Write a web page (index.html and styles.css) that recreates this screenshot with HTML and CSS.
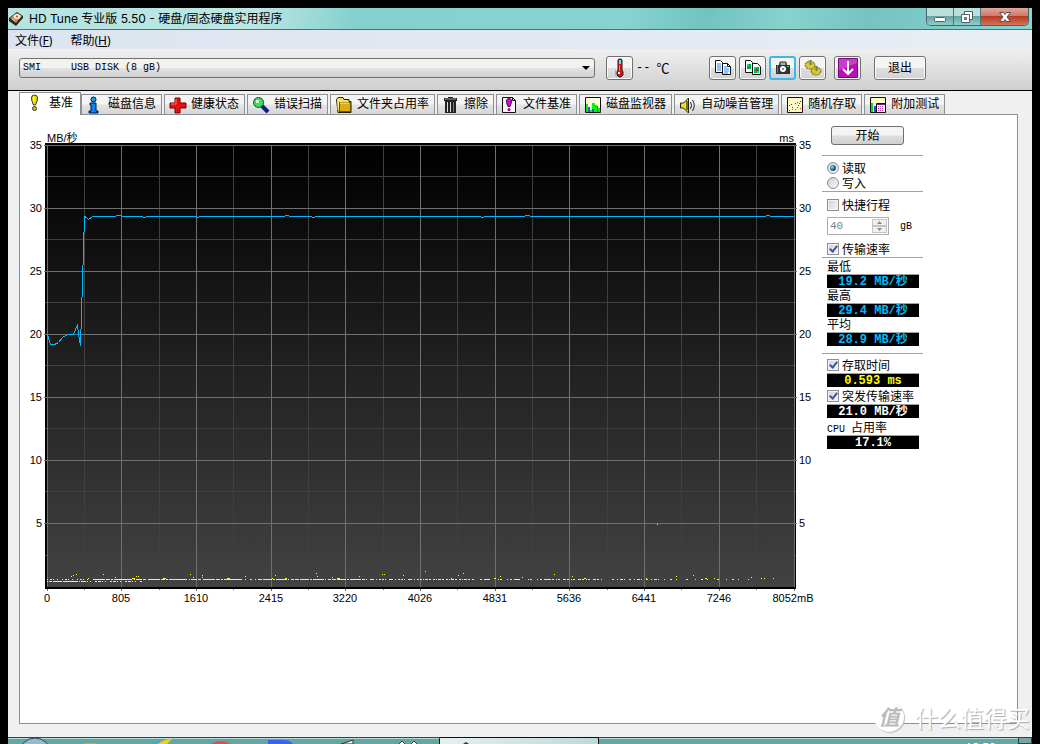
FILE: index.html
```html
<!DOCTYPE html>
<html lang="zh-CN">
<head>
<meta charset="utf-8">
<title>HD Tune 专业版 5.50</title>
<link rel="stylesheet" href="styles.css">
</head>
<body>
<div class="window">
  <header class="titlebar">
    <svg class="app-icon" width="16" height="16" viewBox="0 0 16 16"><path d="M1 7 9 1l6 4v2l-7 8-7-5z" fill="#2a2422"/><path d="M2 7 9 2l5 3-6 7z" fill="#c98a4a"/><ellipse cx="9" cy="5.500" rx="3.500" ry="2.500" fill="#f4e8d4"/><circle cx="9" cy="5.500" r="1" fill="#8a5a30"/><path d="m4 8 3 2" stroke="#f5d9a8"/></svg>
    <h1 class="title">HD Tune 专业版 5.50 - 硬盘/固态硬盘实用程序</h1>
    <div class="controls">
      <button class="control" aria-label="最小化"><svg width="14" height="14" viewBox="0 0 14 14"><rect x="1.500" y="7.500" width="11" height="4" rx="1" fill="#fff" stroke="#53606b"/></svg></button>
      <button class="control" aria-label="还原"><svg width="14" height="14" viewBox="0 0 14 14"><path d="M4.500 1.500h8v8h-8z" fill="#fff" stroke="#53606b"/><path d="M1.500 4.500h8v8h-8z" fill="#fff" stroke="#53606b"/><path d="M4.500 7.500h2v2h-2z" fill="#8bc" stroke="#53606b"/></svg></button>
      <button class="control close" aria-label="关闭"><svg width="14" height="12" viewBox="0 0 14 12"><path d="M1.500 1.500h4L7 3.500l1.500-2h4L9 6l3.500 4.500h-4L7 8.500l-1.500 2h-4L5 6z" fill="#fff" stroke="#5b4a4c"/></svg></button>
    </div>
  </header>

  <nav class="menubar">
    <button class="menu">文件(<u>F</u>)</button>
    <button class="menu">帮助(<u>H</u>)</button>
  </nav>

  <div class="toolbar">
    <div class="combo">
      <select class="drive" aria-label="硬盘"><option>SMI&nbsp;&nbsp;&nbsp;&nbsp;&nbsp;USB DISK (8 gB)</option></select>
      <svg class="arrow" width="8" height="4" viewBox="0 0 8 4"><path d="M0 0h8L4 4z"/></svg>
    </div>
    <button class="tool" aria-label="温度"><svg width="16" height="20" viewBox="0 0 16 20"><path d="M6 2q0-1 2-1t2 1v10l1 2v3l-2 2H7l-2-2v-3l1-2z" fill="#e01010" stroke="#222"/><path d="M7 2h2v4H7z" fill="#4fe3ee"/><path d="M7 7h1v6H7z" fill="#ff7a6a"/><path d="M6 14h2v2H6z" fill="#fff"/><path d="M3.500 12v5l2 2" fill="none" stroke="#5cc"/></svg></button>
    <span class="temp"><span>--</span><span class="deg">℃</span></span>
    <div class="tools">
      <button class="tool" aria-label="复制文本"><svg width="18" height="16" viewBox="0 0 18 16"><path d="M1.500.500h5l2 2v10h-7z" fill="#fff" stroke="#111"/><path d="M3 4h4M3 6h4M3 8h4M3 10h4" stroke="#28f"/><path d="M8.500 3.500h5l3 3v8h-8z" fill="#fff" stroke="#111"/><path d="M13.500 3.500v3h3" fill="none" stroke="#111"/><path d="M10 7h3M10 9h5M10 11h5M10 13h4" stroke="#28f"/></svg></button>
      <button class="tool" aria-label="复制图像"><svg width="18" height="16" viewBox="0 0 18 16"><path d="M1.500.500h5l2 2v10h-7z" fill="#fff" stroke="#111"/><path d="M3 4h4v5H3z" fill="#0a3"/><path d="M3 4h2v2H3z" fill="#1bf"/><path d="M8.500 3.500h5l3 3v8h-8z" fill="#fff" stroke="#111"/><path d="M10 7h5v6h-5z" fill="#0b3"/><path d="M10 7h2v2h-2zM13 11h2v2h-2z" fill="#1bf"/><path d="M12 9h2v2h-2z" fill="#e11"/></svg></button>
      <button class="tool hot" aria-label="截图"><svg width="18" height="14" viewBox="0 0 18 14"><path d="M2 4h3l1-3h6l1 3h3v9H2z" fill="#2d3138"/><path d="M6 4V1h6v3" fill="#aaa" stroke="#333"/><path d="M3 4h1v8H3z" fill="#777"/><circle cx="9" cy="8" r="3" fill="#fff"/><circle cx="9" cy="8" r="1" fill="#667"/><path d="M13 5h2v1h-2z" fill="#1e2"/></svg></button>
      <button class="tool" aria-label="选项"><svg width="18" height="18" viewBox="0 0 18 18"><g stroke="#6b6714" fill="#c9bd22"><ellipse cx="6" cy="6" rx="5" ry="4" stroke-dasharray="2 1"/><ellipse cx="12" cy="12" rx="5" ry="4" stroke-dasharray="2 1"/></g><path d="M2 6h8M4 8h6M9 12h7M5 3h3M11 14h4" stroke="#e6da3c"/><path d="M6.500 1v5M12.500 7v5" stroke="#777" stroke-width="2"/></svg></button>
      <button class="tool save" aria-label="保存"><svg width="20" height="20" viewBox="0 0 20 20"><path d="M.500.500h19v19H.500z" fill="#b412b6" stroke="#7b087c"/><path d="M1 1h18v4L1 12z" fill="#c63fc8"/><path d="M10 3v13M5 11l5 5 5-5" fill="none" stroke="#fff" stroke-width="2"/></svg></button>
      <button class="tool exit">退出</button>
    </div>
  </div>

  <main class="content">
    <div class="tabs" role="tablist">
      <button class="tab active" role="tab" aria-selected="true"><svg width="18" height="18" viewBox="0 0 18 18"><path d="M4.500 4q0-3 3-3t3 3-2 7h-2q-2-4-2-7z" fill="#f0e000" stroke="#333"/><path d="M6 3h1v4H6z" fill="#fff"/><circle cx="7.500" cy="14.500" r="2" fill="#d8c800" stroke="#333"/></svg>基准</button>
      <button class="tab" role="tab"><svg width="18" height="18" viewBox="0 0 18 18"><path d="M4 7h6v8h2v2H3v-2h2V9H4z" fill="#08f" stroke="#013"/><circle cx="7.500" cy="3.500" r="2.500" fill="#1aa0f0" stroke="#013"/></svg>磁盘信息</button>
      <button class="tab" role="tab"><svg width="18" height="18" viewBox="0 0 18 18"><path d="M6 2h5v5h6v5h-6v5H6v-5H1V7h5z" fill="#e81010" stroke="#700"/><path d="M7 3v5H2" fill="none" stroke="#f77"/></svg>健康状态</button>
      <button class="tab" role="tab"><svg width="18" height="18" viewBox="0 0 18 18"><path d="m10 10 6 6" stroke="#102080" stroke-width="4"/><circle cx="6.500" cy="6.500" r="5" fill="#38df58" stroke="#244"/><path d="M4 4h3v3H4z" fill="#d4ffd4"/></svg>错误扫描</button>
      <button class="tab" role="tab"><svg width="18" height="18" viewBox="0 0 18 18"><path d="M1.500 3.500 3 1.500h5l1 2h5v2h2v11h-13z" fill="#f7dc55" stroke="#221c00"/><path d="M4.500 6.500h11v9h-11z" fill="#dfae0c" stroke="#665000"/><path d="M3 4v10M5 7h9" stroke="#fff2a0"/></svg>文件夹占用率</button>
      <button class="tab" role="tab"><svg width="18" height="18" viewBox="0 0 18 18"><path d="M2 2h4V1h5v1h4v3h-1v12H3V5H2z" fill="#222"/><path d="M3 3h11" stroke="#999"/><path d="M5.500 6v10M8.500 6v10" stroke="#ddd"/><path d="M11.500 6v10" stroke="#777"/></svg>擦除</button>
      <button class="tab" role="tab"><svg width="18" height="18" viewBox="0 0 18 18"><path d="M1.500 1.500h10l3 3v12h-13z" fill="#f5f5f5" stroke="#111"/><path d="M11.500 1.500v3h3" fill="none" stroke="#111"/><path d="M5.500 5q0-2.500 2.500-2.500T10.500 5 9 10.500H7Q5.500 8 5.500 5z" fill="#d60dd6" stroke="#414"/><circle cx="8" cy="13.500" r="1.500" fill="#a0a"/></svg>文件基准</button>
      <button class="tab" role="tab"><svg width="18" height="18" viewBox="0 0 18 18"><path d="M1.500 1.500h15v15h-15z" fill="#fffcd8" stroke="#111"/><path d="M2 16V8h2v3h2v3h2V7h3v2h2v3h3v4z" fill="#10ea18"/><path d="M4 11h2v5H4zM8 13h2v3H8zM13 10h1v6h-1z" fill="#35d"/></svg>磁盘监视器</button>
      <button class="tab" role="tab"><svg width="18" height="18" viewBox="0 0 18 18"><path d="M1.500 7v5h3l5 5V2l-5 5z" fill="#ece01c" stroke="#222"/><path d="M8 5v9" stroke="#777b00" stroke-width="2"/><path d="M11.500 6q2 3.500 0 7M13.500 4q3.500 5.500 0 11" fill="none" stroke="#222"/></svg>自动噪音管理</button>
      <button class="tab" role="tab"><svg width="18" height="18" viewBox="0 0 18 18"><path d="M1.500 1.500h15v15h-15z" fill="#fff9c8" stroke="#111"/><path d="M3 9.500h1M6 11.500h1M9 7.500h1M12 9.500h1M14 5.500h1M5 8.500h1" stroke="#23f"/><path d="M3 14.500h1M6 13.500h1M9 13.500h1M11 11.500h1M14 12.500h1M11 6.500h1M13 7.500h1" stroke="#e22"/></svg>随机存取</button>
      <button class="tab" role="tab"><svg width="18" height="18" viewBox="0 0 18 18"><path d="M1.500 1.500h15v15h-15z" fill="#fff9c8" stroke="#111"/><path d="M2 7h2v9H2z" fill="#0d2"/><path d="M5 10h2v6H5z" fill="#34e"/><path d="M7.500 7.500h9v9h-9z" fill="#fff" stroke="#111"/><path d="M8 8.500h8" stroke="#339"/><path d="M9 10.500h6M9 12.500h6M9 14.500h6" stroke="#c3a" stroke-dasharray="1 1"/></svg>附加测试</button>
    </div>

    <section class="panel" role="tabpanel" aria-label="基准">
      <svg class="chart" width="802" height="500" viewBox="20 115 802 500" role="img" aria-label="传输速率图表">
        <defs><linearGradient id="plot" x1="0" y1="0" x2="0" y2="1"><stop offset="0" stop-color="#000"/><stop offset="1" stop-color="#424242"/></linearGradient></defs>
        <g shape-rendering="crispEdges" fill="none">
          <rect x="45" y="143" width="751" height="446" fill="#000"/>
          <rect x="48" y="146" width="746" height="441" fill="url(#plot)"/>
          <path class="minor" d="M84.500 145v443M159.500 145v443M233.500 145v443M308.500 145v443M383.500 145v443M457.500 145v443M532.500 145v443M607.500 145v443M681.500 145v443M756.500 145v443M45 176.500h751M45 239.500h751M45 302.500h751M45 365.500h751M45 428.500h751M45 491.500h751M45 555.500h751"/>
          <path class="major" d="M47.500 145v443M121.500 145v446M196.500 145v446M271.500 145v446M345.500 145v446M420.500 145v446M495.500 145v446M569.500 145v446M644.500 145v446M719.500 145v446M794.500 145v446M44 145.500h753M44 208.500h753M44 271.500h753M44 334.500h753M44 397.500h753M44 460.500h753M44 523.500h753"/>
          <path d="M45 588h751" stroke="#000" stroke-width="2"/>
          <path class="major" d="M47.500 589v2M121.500 589v2M196.500 589v2M271.500 589v2M345.500 589v2M420.500 589v2M495.500 589v2M569.500 589v2M644.500 589v2M719.500 589v2M794.500 589v2M84.500 589v1M159.500 589v1M233.500 589v1M308.500 589v1M383.500 589v1M457.500 589v1M532.500 589v1M607.500 589v1M681.500 589v1M756.500 589v1"/>
          <path class="speed" d="M47.500 334.500 48.500 338.500 50.500 344.500H54.500L58.500 342.500 62.500 337.500 67.500 334.500H73.500L77.500 324.500 78.500 334.500 80.500 345.500 84.500 216.500 86.500 217.500 88.500 219.500 92.500 216.500"/>
          <path class="speed" d="M92 216.500h24M116 215.500h6M122 216.500h21M143 217.500h3M146 216.500h51M197 217.500h2M199 216.500h86M285 215.500h4M289 216.500h23M312 217.500h3M315 216.500h166M481 217.500h3M484 216.500h41M525 215.500h5M530 216.500h236M766 215.500h4M770 216.500h24"/>
          <g class="access">
            <path stroke-dasharray="1 1 3 1 9 1 15 1" d="M47 581.500h36"/>
            <path stroke-dasharray="3 1 1 2 1 4 2 1" d="M83 581.500h60"/>
            <path stroke-dasharray="1 2 2 1 1 3 1 4" d="M47 579.500h45"/>
            <path stroke-dasharray="12 1 4 1 2 1 18 2 1 1 6 1 3 2" d="M93 579.500h147"/>
            <path stroke-dasharray="2 3 1 4" d="M240 579.500h18"/>
            <path stroke-dasharray="4 1 9 1 2 1 11 1 1 2 3 1" d="M258 579.500h105"/>
            <path stroke-dasharray="2 1 1 3 4 2 1 2 2 1" d="M363 579.500h57"/>
            <path stroke-dasharray="2 1 1 1 3 1 2 2" d="M420 579.500h55"/>
            <path stroke-dasharray="2 2 6 8 1 1 2 5 1 2" d="M480 579.500h70"/>
            <path stroke-dasharray="3 1 2 2 1 1 2 3" d="M548 579.500h54"/>
            <path stroke-dasharray="2 3 1 2 3 1 1 4" d="M612 579.500h50"/>
            <path stroke-dasharray="1 5 2 4 1 9 2 7" d="M664 579.500h85"/>
            <path d="M71 576.500h1M73 575.500h1M76 574.500h1M88 578.500h1M103 574.500h1M115 577.500h1M132 578.500h3M136 576.500h1M138 576.500h1M163 578.500h3M190 574.500h1M193 577.500h1M202 575.500h1M202 577.500h1M227 578.500h3M245 576.500h1M272 578.500h1M275 575.500h1M285 578.500h2M316 573.500h1M317 576.500h1M332 577.500h1M337 578.500h3M359 576.500h1M382 574.500h1M384 574.500h1M403 575.500h1M425 571.500h1M451 578.500h1M458 575.500h1M463 573.500h1M494 578.500h2M500 576.500h1M522 577.500h1M554 574.500h1M572 576.500h1M584 578.500h2M646 578.500h1M657 524.500h1M676 576.500h1M693 575.500h1M705 578.500h2M714 578.500h1M751 577.500h1M761 578.500h1M764 578.500h1M773 578.500h1"/>
          </g>
        </g>
        <g class="axis" text-anchor="end">
          <text x="42" y="149">35</text><text x="42" y="212">30</text><text x="42" y="275">25</text><text x="42" y="338">20</text><text x="42" y="401">15</text><text x="42" y="464">10</text><text x="42" y="527">5</text><text x="794" y="142">ms</text>
        </g>
        <g class="axis">
          <text x="47" y="142">MB/秒</text><text x="799" y="149">35</text><text x="799" y="212">30</text><text x="799" y="275">25</text><text x="799" y="338">20</text><text x="799" y="401">15</text><text x="799" y="464">10</text><text x="799" y="527">5</text>
        </g>
        <g class="axis" text-anchor="middle">
          <text x="47" y="602">0</text><text x="121" y="602">805</text><text x="196" y="602">1610</text><text x="271" y="602">2415</text><text x="345" y="602">3220</text><text x="420" y="602">4026</text><text x="495" y="602">4831</text><text x="569" y="602">5636</text><text x="644" y="602">6441</text><text x="719" y="602">7246</text><text x="793" y="602">8052mB</text>
        </g>
      </svg>

      <form class="side">
        <button class="start" type="button">开始</button>
        <fieldset class="modes">
          <label class="option"><input class="radio" type="radio" name="mode" checked>读取</label>
          <label class="option"><input class="radio" type="radio" name="mode">写入</label>
        </fieldset>
        <label class="option short"><input class="check" type="checkbox" disabled>快捷行程</label>
        <div class="stroke">
          <div class="spin">
            <input class="size" type="text" value="40" aria-label="快捷行程容量" disabled>
            <span class="steps">
              <button class="step" type="button" aria-label="增加" disabled><svg width="5" height="3" viewBox="0 0 5 3"><path d="M0 3h5L2.500 0z"/></svg></button>
              <button class="step" type="button" aria-label="减少" disabled><svg width="5" height="3" viewBox="0 0 5 3"><path d="M0 0h5L2.500 3z"/></svg></button>
            </span>
          </div>
          <span class="unit">gB</span>
        </div>
        <label class="option rate"><input class="check" type="checkbox" checked>传输速率</label>
        <div class="results">
          <span class="name">最低</span><output class="value blue">19.2 MB/秒</output>
          <span class="name">最高</span><output class="value blue">29.4 MB/秒</output>
          <span class="name">平均</span><output class="value blue">28.9 MB/秒</output>
        </div>
        <div class="extras">
          <div class="extra"><label class="option"><input class="check" type="checkbox" checked>存取时间</label><output class="value yellow">0.593 ms</output></div>
          <div class="extra"><label class="option"><input class="check" type="checkbox" checked>突发传输速率</label><output class="value">21.0 MB/秒</output></div>
          <div class="extra"><span class="name"><span class="mono">CPU </span>占用率</span><output class="value">17.1%</output></div>
        </div>
      </form>
    </section>
  </main>
</div>

<footer class="taskbar">
  <svg class="launch" width="431" height="7" viewBox="8 737 431 7">
    <circle cx="35" cy="754" r="16" fill="#9db8cc" stroke="#1d4668"/>
    <path d="M83 743h13v1H83z" fill="#c8a060"/>
    <path d="M158 744q6-5 14-5l-5 5z" fill="#f0cf20"/><path d="M153 744q3-2 7-3" stroke="#38a8e0" stroke-width="2" fill="none"/>
    <path d="M211 744q10-6 20 0z" fill="#e84a50"/>
    <path d="M268 740h16q6 0 9 4h-25z" fill="#3f62ee"/>
    <path d="m341 744 12-4v4z" fill="#eee" stroke="#333"/>
    <path d="m399 744 3-3 3 3m6 0 3-3 3 3" fill="#fff" stroke="#444"/>
  </svg>
  <div class="task"><svg width="12" height="5" viewBox="0 0 12 5"><path d="M3 5 6 3l3 2z" fill="#333"/></svg></div>
  <time class="clock">18:50</time>
  <span class="desktop"></span>
</footer>

<div class="watermark"><span class="seal">值</span><span>什么值得买</span></div>
</body>
</html>
```
FILE: styles.css
```css
* { box-sizing: border-box; }

body {
  position: relative;
  display: flex;
  flex-direction: column;
  height: 100vh;
  margin: 0;
  padding: 8px 8px 0;
  overflow: hidden;
  background: #000;
  color: #000;
  font: 12px/15px "Liberation Sans", "Noto Sans CJK SC", sans-serif;
}

button, input, select { margin: 0; padding: 0; font: inherit; color: inherit; }
svg { flex: none; display: block; }

.window { flex: 1; display: flex; flex-direction: column; min-height: 0; background: #f0f0f0; }

.titlebar {
  display: flex;
  align-items: flex-start;
  height: 22px;
  padding-right: 3px;
  border-bottom: 1px solid #3c7876;
  background: linear-gradient(100deg, #b4e3e1 0, #bce7e5 24%, #84d0ce 34%, #86d4d2 60%, #72c3c0 68%, #86d2cf 76%, #75c4c1 84%, #8ad4d2 100%);
}
.app-icon { margin: 3px 5px 0 0; }
.title { flex: 1; margin: 2px 0 0; font: 12px/18px Inter, "Noto Sans CJK SC", sans-serif; white-space: nowrap; }
.controls { display: flex; height: 18px; border: 1px solid #47666a; border-top: 0; border-radius: 0 0 5px 5px; overflow: hidden; }
.control {
  display: grid;
  place-items: center;
  width: 27px;
  border: 0;
  border-right: 1px solid #47777a;
  background: linear-gradient(#bcdedd 0 45%, #67a5a4 50%, #91cdca);
}
.control.close { width: 47px; border-right: 0; background: linear-gradient(#dfa79b 0, #d07b6c 45%, #b83a22 50%, #d2735a); }

.menubar { display: flex; gap: 18px; height: 19px; padding-left: 7px; background: linear-gradient(90deg, #dce4ef, #e9edf4); }
.menu { border: 0; background: none; font: 12px/21px "Noto Sans", "Noto Sans CJK SC", sans-serif; }

.toolbar {
  display: flex;
  align-items: flex-start;
  height: 42px;
  padding: 7px 106px 0 11px;
  border-bottom: 1px solid #000;
  background: linear-gradient(#f0f0f0, #cfcfcf);
}
.combo { flex: 1; display: grid; align-items: center; margin: 2px 11px 0 0; }
.drive {
  grid-area: 1 / 1;
  appearance: none;
  width: 100%;
  height: 20px;
  padding-left: 3px;
  border: 1px solid #707070;
  border-radius: 3px;
  background: linear-gradient(#f2f2f2 0 48%, #e2e2e2 52%, #d0d0d0);
  font: 10px/18px "Liberation Mono", monospace;
}
.arrow { grid-area: 1 / 1; justify-self: end; margin-right: 5px; pointer-events: none; }
.tool {
  display: grid;
  place-items: center;
  width: 27px;
  height: 24px;
  border: 1px solid #707070;
  border-radius: 3px;
  background: linear-gradient(#f4f4f4 0 48%, #dedede 52%, #d2d2d2);
  box-shadow: inset 0 0 0 1px #fafafa;
}
.tool.hot { border: 2px solid #3db8e6; box-shadow: none; }
.tool.save { margin-left: 5px; }
.tool.exit { width: 52px; margin-left: 10px; }
.temp { display: flex; gap: 6px; width: 76px; padding-left: 3px; font: 12px/24px "Liberation Mono", monospace; }
.deg { font: 13px/23px "Noto Sans CJK SC", sans-serif; }
.tools { display: flex; gap: 3px; }

.content { flex: 1; display: flex; flex-direction: column; min-height: 0; padding: 1px 14px 13px 11px; }
.tabs { display: flex; align-items: flex-end; gap: 2px; height: 22px; }
.tab {
  display: flex;
  align-items: center;
  gap: 4px;
  height: 20px;
  padding: 0 5px 0 4px;
  border: 1px solid #8b8f98;
  border-bottom: 0;
  background: linear-gradient(#f4f4f4 0 48%, #e4e4e4 52%, #d6d6d6);
  line-height: 17px;
  white-space: nowrap;
}
.tab.active {
  position: relative;
  height: 23px;
  margin: 0 -2px -1px 0;
  padding: 0 7px 2px;
  background: #fff;
}

.panel { flex: 1; display: flex; align-items: flex-start; min-height: 0; border: 1px solid #8b8f98; background: #fff; }

.minor { stroke: #404040; }
.major { stroke: #707070; }
.speed { stroke: #00b9fc; }
.access { stroke: #ff0; }
.axis { font: 11px "Liberation Sans", "Noto Sans CJK SC", sans-serif; }

.side { display: flex; flex-direction: column; width: 101px; padding-top: 11px; }
.start {
  width: 73px;
  height: 19px;
  margin-left: 9px;
  border: 1px solid #707070;
  border-radius: 3px;
  background: linear-gradient(#f4f4f4 0 48%, #dedede 52%, #d0d0d0);
  line-height: 16px;
}
.modes { margin: 10px 0 0; padding: 5px 0 0; border: 0; border-top: 1px solid #a0a0a0; border-bottom: 1px solid #a0a0a0; }
.option { display: flex; align-items: flex-start; gap: 3px; height: 15px; padding-left: 5px; line-height: 17px; white-space: nowrap; }
.radio, .check { appearance: none; flex: none; display: grid; place-items: center; width: 12px; height: 12px; margin-top: 1px; border: 1px solid #8e8f8f; background: linear-gradient(135deg, #cdd1d6, #f8f8f8); }
.check { box-shadow: inset 0 0 0 1px #f4f4f4; }
.radio { border-radius: 50%; }
.radio:checked::before { content: ""; width: 6px; height: 6px; border-radius: 50%; background: radial-gradient(circle at 35% 35%, #8fd8f8, #1b5c86 55%, #0b2f4b); }
.check:checked::before { content: ""; width: 3px; height: 6px; margin-bottom: 2px; border: solid #3c55a0; border-width: 0 2px 2px 0; transform: rotate(40deg); }
.short { margin-top: 6px; }
.stroke { display: flex; align-items: center; gap: 11px; margin: 4px 0 7px 5px; }
.spin { display: flex; width: 62px; height: 18px; padding: 1px; border: 1px solid #abadb3; background: #fff; }
.size { flex: 1; min-width: 0; padding-left: 1px; border: 0; background: none; color: #808080; font: 11px/14px "Liberation Mono", monospace; }
.steps { display: flex; flex-direction: column; width: 15px; }
.step { flex: 1; display: grid; place-items: center; border: 1px solid #c4c4c4; background: #f0f0f0; fill: #888; }
.unit, .mono { font: 10px/15px "Liberation Mono", monospace; }
.mono { white-space: pre; }
.results, .extras { display: flex; flex-direction: column; border-top: 1px solid #a0a0a0; }
.results { padding: 1px 0 0; }
.extras { gap: 2px; margin-top: 7px; padding-top: 4px; }
.name { height: 15px; padding-left: 5px; line-height: 17px; }
.extra { display: flex; flex-direction: column; }
.value {
  height: 14px;
  margin: 0 4px 0 5px;
  border-top: 1px solid #a0a0a0;
  overflow: hidden;
  background: #000;
  color: #fff;
  font: bold 12px/15px "Liberation Mono", "Noto Sans CJK SC", monospace;
  text-align: center;
}
.value.blue { color: #00b9fc; }
.value.yellow { color: #ff0; }

.taskbar {
  display: flex;
  height: 7px;
  overflow: hidden;
  background: #67a5a2;
  box-shadow: inset 0 1px #2a4b4b, inset 0 2px #b2dcda;
}
.task { width: 160px; padding: 1px 0 0 20px; border: 1px solid #111; border-bottom: 0; border-radius: 2px 2px 0 0; background: linear-gradient(90deg, #e4f0f0, #bcdad8); }
.clock { margin: 3px 22px 0 auto; color: #fff; font: 12px/16px "Noto Sans", sans-serif; }
.desktop { width: 14px; border: 1px solid #24484a; background: #79a5a4; }

.watermark {
  position: absolute;
  right: 10px;
  bottom: 12px;
  display: flex;
  align-items: center;
  gap: 11px;
  color: #fff;
  font: 23px/30px "Noto Sans CJK SC", sans-serif;
  text-shadow: 1px 1px 1px #aaa;
  pointer-events: none;
}
.seal { width: 30px; height: 30px; border-radius: 50%; background: #fff; box-shadow: 1px 1px 1px #bbb; color: #bbb; font-size: 21px; font-style: italic; font-weight: bold; line-height: 28px; text-align: center; text-shadow: none; }
```
